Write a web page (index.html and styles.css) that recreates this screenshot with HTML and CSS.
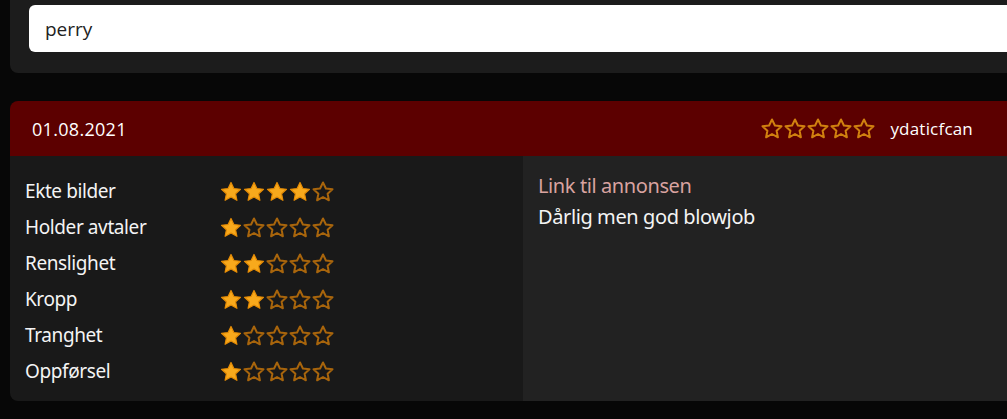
FILE: index.html
```html
<!DOCTYPE html>
<html lang="no">
<head>
    <meta charset="UTF-8">
    <title>Anmeldelser</title>
    <link rel="stylesheet" href="styles.css">
</head>
<body>
    <div class="page">
        <div class="search-panel">
            <input class="search-input" type="text" value="perry">
        </div>

        <div class="review">
            <div class="review-head">
                <span class="review-date">01.08.2021</span>
                <div class="review-user">
                    <div class="stars stars-head" data-rating="0"></div>
                    <span class="username">ydaticfcan</span>
                </div>
            </div>
            <div class="review-body">
                <div class="ratings">
                    <div class="rating-row"><span class="rating-label">Ekte bilder</span><div class="stars" data-rating="4"></div></div>
                    <div class="rating-row"><span class="rating-label">Holder avtaler</span><div class="stars" data-rating="1"></div></div>
                    <div class="rating-row"><span class="rating-label">Renslighet</span><div class="stars" data-rating="2"></div></div>
                    <div class="rating-row"><span class="rating-label">Kropp</span><div class="stars" data-rating="2"></div></div>
                    <div class="rating-row"><span class="rating-label">Tranghet</span><div class="stars" data-rating="1"></div></div>
                    <div class="rating-row"><span class="rating-label">Oppførsel</span><div class="stars" data-rating="1"></div></div>
                </div>
                <div class="comment">
                    <a class="ad-link" href="#">Link til annonsen</a>
                    <p class="comment-text">Dårlig men god blowjob</p>
                </div>
            </div>
        </div>
    </div>

    <script>
        // draw five stars in every .stars box, filled up to data-rating
        const starPath = 'M11 1.5l2.9 6 6.6.8-4.9 4.5 1.3 6.5L11 16l-5.9 3.3 1.3-6.5-4.9-4.5 6.6-.8z';

        document.querySelectorAll('.stars').forEach(function(box) {
            const rating = parseInt(box.dataset.rating, 10);
            let html = '';
            for (let i = 0; i < 5; i++) {
                const cls = i < rating ? 'star full' : 'star empty';
                html += '<svg class="' + cls + '" viewBox="0 0 22 21"><path d="' + starPath + '"/></svg>';
            }
            box.innerHTML = html;
        });
    </script>
</body>
</html>
```

FILE: styles.css
```css
html {
    overflow: hidden;
}
body {
    margin: 0;
    background-color: #070707;
    font-family: "Open Sans", "Noto Sans", sans-serif;
    color: #fff;
}
.page {
    width: 1060px;
    padding-left: 10px;
}
.search-panel {
    background-color: #1c1c1c;
    padding: 5px 0 21px 19px;
    border-radius: 0 0 8px 8px;
}
.search-input {
    display: block;
    width: 100%;
    box-sizing: border-box;
    height: 47px;
    border: none;
    border-radius: 6px;
    background-color: #fff;
    padding: 0 16px;
    font-family: "Open Sans", sans-serif;
    font-size: 19px;
    color: #222;
    outline: none;
}
.review {
    margin-top: 28px;
    border-radius: 8px;
    overflow: hidden;
}
.review-head {
    display: flex;
    align-items: center;
    justify-content: space-between;
    height: 55px;
    padding: 0 97px 0 22px;
    background-color: #5c0000;
    font-size: 18px;
}
.review-date {
    font-size: 18px;
    letter-spacing: 0.3px;
}
.review-user {
    display: flex;
    align-items: center;
    gap: 15px;
}
.username {
    font-size: 17px;
    letter-spacing: 0.2px;
}
.stars-head {
    gap: 2px;
}
.review-body {
    display: flex;
}
.ratings {
    width: 513px;
    box-sizing: border-box;
    padding: 17px 0 12px 15px;
    background-color: #191919;
}
.rating-row {
    display: flex;
    align-items: center;
    height: 36px;
}
.rating-label {
    width: 195px;
    font-family: "Noto Sans", sans-serif;
    font-size: 19px;
    letter-spacing: -0.4px;
    color: #f4f4f4;
}
.stars {
    display: flex;
    gap: 1px;
}
.star {
    width: 22px;
    height: 21px;
}
.star.full path {
    fill: #f8a91c;
    stroke: #e48b05;
    stroke-width: 1.2;
    stroke-linejoin: round;
}
.star.empty path {
    fill: none;
    stroke: #a8650c;
    stroke-width: 2;
    stroke-linejoin: round;
}
.stars-head .star.empty path {
    stroke: #d0800f;
}
.comment {
    flex: 1;
    padding: 17px 15px;
    background-color: #222;
}
.ad-link {
    display: block;
    font-family: "Noto Sans", sans-serif;
    font-size: 20px;
    letter-spacing: -0.4px;
    color: #d9a3a0;
    text-decoration: none;
    line-height: 26px;
}
.comment-text {
    margin: 5px 0 0;
    font-family: "Noto Sans", sans-serif;
    font-size: 20px;
    letter-spacing: -0.4px;
    line-height: 26px;
    color: #f4f4f4;
}
```
